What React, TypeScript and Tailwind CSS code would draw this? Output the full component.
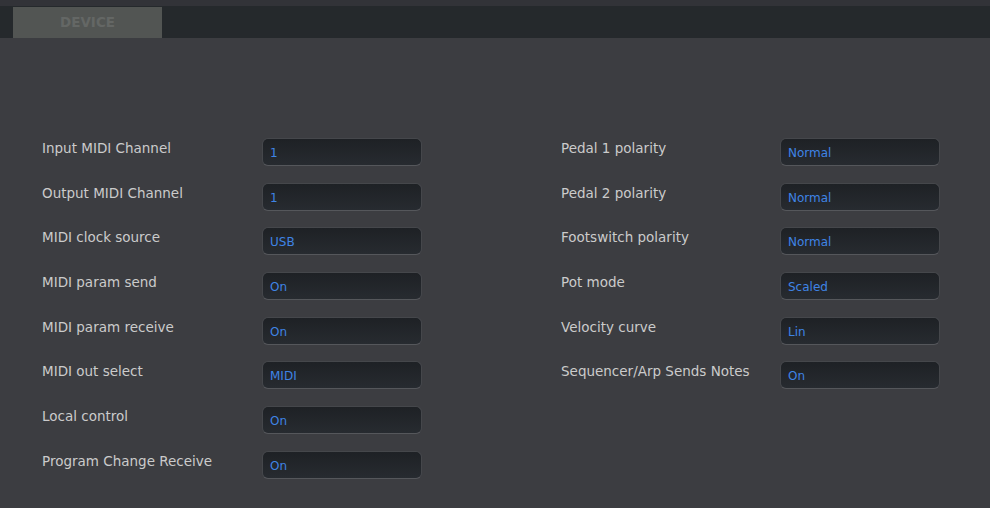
const left: [string, string][] = [
  ["Input MIDI Channel", "1"],
  ["Output MIDI Channel", "1"],
  ["MIDI clock source", "USB"],
  ["MIDI param send", "On"],
  ["MIDI param receive", "On"],
  ["MIDI out select", "MIDI"],
  ["Local control", "On"],
  ["Program Change Receive", "On"],
];

const right: [string, string][] = [
  ["Pedal 1 polarity", "Normal"],
  ["Pedal 2 polarity", "Normal"],
  ["Footswitch polarity", "Normal"],
  ["Pot mode", "Scaled"],
  ["Velocity curve", "Lin"],
  ["Sequencer/Arp Sends Notes", "On"],
];

function Row({ label, value, narrow }: { label: string; value: string; narrow?: boolean }) {
  return (
    <div className="flex h-[28px] items-start">
      <div className={(narrow ? "w-[219px]" : "w-[220px]") + " pt-[1px] text-[13.5px] leading-[18px] text-[#cbcbcb]"}>{label}</div>
      <div className="flex h-[28px] w-[160px] items-center rounded-[6px] border border-[#45474b] border-b-[#55575b] bg-gradient-to-b from-[#1e2125] to-[#272b30] px-[7px] pt-[2px] text-[12px] text-[#3f84e5]">
        {value}
      </div>
    </div>
  );
}

export default function App() {
  return (
    <div
      className="flex h-[508px] w-[990px] flex-col overflow-hidden bg-[#3c3d41]"
      style={{ fontFamily: '"DejaVu Sans", "Noto Sans", sans-serif' }}
    >
      <div className="h-[6px] bg-[#323338]" />
      <div className="flex h-[32px] bg-[#25292c] pl-[13px]">
        <div className="mt-[1px] flex w-[149px] items-center justify-center bg-[#525553] text-[13.5px] font-bold text-[#646765]">
          DEVICE
        </div>
      </div>
      <div className="flex gap-[139px] pl-[42px] pt-[100px]">
        <div className="flex flex-col gap-[16.7px]">
          {left.map(([l, v]) => (
            <Row key={l} label={l} value={v} />
          ))}
        </div>
        <div className="flex flex-col gap-[16.7px]">
          {right.map(([l, v]) => (
            <Row key={l} label={l} value={v} narrow />
          ))}
        </div>
      </div>
    </div>
  );
}
